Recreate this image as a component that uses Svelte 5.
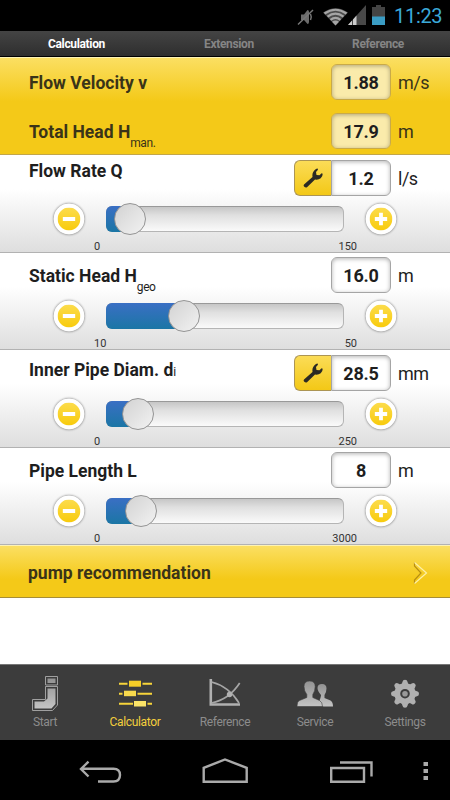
<script lang="ts">
	type Row = {
		label: string;
		sub?: string;
		value: string;
		unit: string;
		min: string;
		max: string;
		fill: number;
		tool: boolean;
		kind: string;
	};

	const tabs = ['Calculation', 'Extension', 'Reference'];
	let activeTab = $state('Calculation');
	let activeItem = $state('Calculator');

	const results = [
		{ label: 'Flow Velocity v', sub: '', value: '1.88', unit: 'm/s' },
		{ label: 'Total Head H', sub: 'man.', value: '17.9', unit: 'm' }
	];

	const rows: Row[] = [
		{ label: 'Flow Rate Q', value: '1.2', unit: 'l/s', min: '0', max: '150', fill: 23.5, tool: true, kind: 'flow' },
		{ label: 'Static Head H', sub: 'geo', value: '16.0', unit: 'm', min: '10', max: '50', fill: 78, tool: false, kind: 'lift' },
		{ label: 'Inner Pipe Diam. d', sub: 'i', value: '28.5', unit: 'mm', min: '0', max: '250', fill: 32, tool: true, kind: 'diam' },
		{ label: 'Pipe Length L', value: '8', unit: 'm', min: '0', max: '3000', fill: 35, tool: false, kind: 'length' }
	];

	const items = ['Start', 'Calculator', 'Reference', 'Service', 'Settings'];
</script>

<div class="screen">
	<div class="status">
		<svg class="mute" width="18" height="20" viewBox="0 0 18 20">
			<path d="M4 7.500h3l3.500-4.500q1.500 0 1.500 2v10q0 2-1.500 2l-3.500-4H4z" fill="#6c6c6c" />
			<path d="M13.500 7q1.500 3 0 6M1 17.500L16 3" fill="none" stroke="#777" stroke-width="1.500" />
		</svg>
		<svg class="wifi" width="25" height="18" viewBox="0 0 25 18">
			<path d="M12.500 17.500L0 4.500Q12.500-4 25 4.500Z" fill="#4c4c4c" />
			<g fill="none" stroke="#a5a5a5" stroke-width="2.200">
				<path d="M1.500 5.500q11-7.500 22 0M4.500 8.700q8-6 16 0M7.500 11.800q5-4 10 0" />
			</g>
			<path d="M12.500 17.500L9 13.800q3.500-2.500 7 0z" fill="#a5a5a5" />
		</svg>
		<svg class="signal" width="18" height="20" viewBox="0 0 18 20">
			<path d="M0 20L18 0V20Z" fill="#484848" />
			<path d="M0 20L4 15.500V20ZM5 14.400L8.500 10.500V20H5Z" fill="#ccc" />
		</svg>
		<svg class="battery" width="13" height="20" viewBox="0 0 13 20">
			<path d="M0 2H4V0H9V2H13V12H0Z" fill="#444" />
			<path d="M0 11.500H13V20H0Z" fill="#3a9cc4" />
		</svg>
		<span class="clock">11:23</span>
	</div>

	<div class="tabs">
		{#each tabs as tab}
			<button class="tab" class:active={tab === activeTab} onclick={() => (activeTab = tab)}>{tab}</button>
		{/each}
	</div>

	<div class="results">
		{#each results as r}
			<div class="result">
				<span class="label">{r.label}{#if r.sub}<sub>{r.sub}</sub>{/if}</span>
				<span class="value">{r.value}</span>
				<span class="unit">{r.unit}</span>
			</div>
		{/each}
	</div>

	{#each rows as row}
		<div class="row {row.kind}" class:tooled={row.tool}>
			<div class="head">
				<span class="label">{row.label}{#if row.sub}<sub>{row.sub}</sub>{/if}</span>
				{#if row.tool}
					<button class="tool" aria-label="Options">
						<svg width="22" height="22" viewBox="0 0 22 22">
							<path d="M2 17.500L10.500 10Q9.800 6 12.500 3.200Q14.200 1.400 15.600 1.600L16 2.800L14 5L14.500 8L17.500 8.300L19.600 6.300L20.700 6.800Q20.800 9.300 18.700 11.200Q16.300 13.100 13 12.500L5 20.200Q3.700 21 2.300 19.800Q1 18.700 2 17.500Z" fill="#2b2a24" />
						</svg>
					</button>
				{/if}
				<span class="value">{row.value}</span>
				<span class="unit">{row.unit}</span>
			</div>
			<div class="slide">
				<button class="round" aria-label="Decrease">
					<svg width="24" height="24" viewBox="0 0 24 24"><path d="M5.500 12H18.500" stroke="#fff" stroke-width="4" /></svg>
				</button>
				<div class="track">
					<div class="fill" style="width: {row.fill}px"></div>
					<div class="knob"></div>
				</div>
				<button class="round" aria-label="Increase">
					<svg width="24" height="24" viewBox="0 0 24 24"><path d="M5.500 12H18.500M12 5.500V18.500" stroke="#fff" stroke-width="4" /></svg>
				</button>
			</div>
			<div class="scale"><span>{row.min}</span><span>{row.max}</span></div>
		</div>
	{/each}

	<button class="pump">
		<span>pump recommendation</span>
		<svg width="16" height="24" viewBox="0 0 16 24">
			<path d="M1.500 1.500V5L8 12L1.500 19V22.500" fill="none" stroke="#b88e12" stroke-width="1.200" />
			<path d="M1.500 1.500L13.500 12L1.500 22.500" fill="none" stroke="#fdf0a8" stroke-width="1.200" />
		</svg>
	</button>

	<div class="blank"></div>

	<div class="bottom">
		{#each items as item}
			<button class="item" class:active={item === activeItem} onclick={() => (activeItem = item)}>
				<svg width="60" height="40" viewBox="0 0 60 40">
					<defs>
						<linearGradient id="metal" x1="0" y1="0" x2="0" y2="1">
							<stop offset="0" stop-color="#929292" />
							<stop offset="1" stop-color="#c4c4c4" />
						</linearGradient>
					</defs>
					{#if item === 'Start'}
						<g fill="#3c3c3c" stroke="#a0a0a0" stroke-width="1">
							<path d="M30.500 4.500H42.500V13H30.500ZM30.500 14.500H42.500V33L37.500 38.500H17.500V27.500H30.500Z" />
						</g>
						<path d="M32.500 6.500H40.500V11H32.500ZM32.500 16.500H40.500V32L36.500 36.500H19.500V29.500H29L32.500 26.500Z" fill="url(#metal)" />
					{:else if item === 'Calculator'}
						<path d="M14 10.700h8.500v2H14zM37.500 10.700H47v2H37.500zM14 20.700h3.500v2H14zM32.500 20.700H47v2H32.500zM14 30.700h14v2H14zM42.500 30.700H47v2H42.500z" fill="#f6d33a" />
						<path d="M24 8.700h12v6H24z" fill="#f5cd27" />
						<path d="M19 18.700h12v5.500H19z" fill="#f8da4d" />
						<path d="M29 29h12v5.500H29z" fill="#fae368" />
					{:else if item === 'Reference'}
						<path d="M15.800 7V32.500H45" fill="none" stroke="#b0b0b0" stroke-width="2.600" />
						<path d="M16.500 10Q34 14.500 44 31M16.500 31Q34 27.500 44.700 11" fill="none" stroke="#a6a6a6" stroke-width="1.700" />
						<circle cx="34.500" cy="22.500" r="2.700" fill="#b2b2b2" />
					{:else if item === 'Service'}
						<path d="M34 32.500C34 28 36 26 36 23Q32.500 19 32.500 16Q32.500 12 37 12Q41.500 12 41.500 16.500Q41.500 20 39.500 23V26L45.500 28.500Q48 30 48 34.500H38.500Z" fill="url(#metal)" />
						<path d="M12 34.500Q12 29.500 14.500 28.500L21.800 25.500V22.500Q19 19 19 14.500Q19 9 24.600 9Q30.200 9 30.200 14.500Q30.200 19 27.800 22.500V25.500L34.500 28.500Q37.500 30 37.500 34.500Z" fill="url(#metal)" stroke="#3c3c3c" stroke-width=".6" />
					{:else}
						<g transform="translate(30 21.700)" fill="#b0b0b0">
							{#each [0, 45, 90, 135, 180, 225, 270, 315] as angle}
								<path d="M-4.200-9Q-2.600-10.500-2.500-12Q-2.200-14 0-14Q2.200-14 2.500-12Q2.600-10.500 4.200-9Z" transform="rotate({angle})" />
							{/each}
							<circle r="10.500" />
							<circle r="3.800" fill="#999" stroke="#3c3c3c" stroke-width="2" />
						</g>
					{/if}
				</svg>
				<span>{item}</span>
			</button>
		{/each}
	</div>

	<div class="nav">
		<svg width="125" height="60" viewBox="0 0 125 60">
			<path d="M51.500 21.700L44 29L51.500 36.500M44.500 28.700H76.500Q83 28.700 83 35T76.500 41.500H61" fill="none" stroke="#aaa" stroke-width="2.400" />
		</svg>
		<svg width="125" height="60" viewBox="0 0 125 60">
			<path d="M41.700 41.700V27.800L63 19.500L84.700 27.800V41.700Z" fill="none" stroke="#aaa" stroke-width="2.400" />
		</svg>
		<svg width="125" height="60" viewBox="0 0 125 60">
			<path d="M44.200 28H77V41.700H44.200ZM53 22.500H84.500V36.500" fill="none" stroke="#aaa" stroke-width="2.400" />
		</svg>
		<svg width="38" height="60" viewBox="0 0 38 60">
			<path d="M11.500 22h4.500v4h-4.500zM11.500 29h4.500v4h-4.500zM11.500 36h4.500v4h-4.500z" fill="#aaa" />
		</svg>
	</div>
</div>

<style>
	:global(body) {
		background: #fff;
	}

	.screen {
		display: flex;
		flex-direction: column;
		width: 450px;
		height: 800px;
		overflow: hidden;
		background: #fff;
		font-family: Roboto, sans-serif;
		color: #1e1e1e;
	}

	.screen * {
		box-sizing: border-box;
	}

	button {
		padding: 0;
		border: 0;
		background: none;
		font-family: inherit;
		color: inherit;
	}

	svg {
		display: block;
		flex: none;
	}

	.status {
		display: flex;
		align-items: flex-start;
		height: 31px;
		padding: 5px 8px 0 297px;
		background: #000;
	}

	.mute {
		margin: 2px 8px 0 0;
	}

	.wifi {
		margin-top: 3px;
	}

	.signal {
		margin-right: 6px;
	}

	.clock {
		margin-left: 9px;
		font-size: 20px;
		line-height: 23px;
		letter-spacing: -0.3px;
		color: #3ba9d8;
		white-space: nowrap;
	}

	.tabs {
		display: grid;
		grid-template-columns: 153px 152px 146px;
		height: 26px;
		background: linear-gradient(#444, #2e2e2e);
		border-bottom: 1px solid #000;
	}

	.tab {
		font-size: 12px;
		font-weight: 700;
		line-height: 27px;
		letter-spacing: -0.35px;
		color: #858585;
	}

	.tab.active {
		color: #fff;
	}

	.results {
		height: 98px;
		padding-top: 6px;
		background: linear-gradient(#fbdf62, #f4c918 45%, #f4c918);
		border-top: 1px solid #fdf2b5;
		border-bottom: 1px solid #c2a64a;
	}

	.result,
	.head {
		display: flex;
		padding-left: 29px;
	}

	.result {
		height: 49px;
	}

	.label {
		flex: 1;
		font-size: 17.5px;
		font-weight: 700;
		line-height: 38px;
		white-space: nowrap;
	}

	.results .label,
	.results .unit {
		color: #3a3418;
	}

	sub {
		position: relative;
		top: 9px;
		font-size: 12px;
		font-weight: 400;
		line-height: 0;
		letter-spacing: -0.4px;
		vertical-align: baseline;
	}

	.value {
		width: 60px;
		height: 36px;
		border: 1.5px solid #a5a5a5;
		border-radius: 6px;
		background: #fff;
		box-shadow: inset 0 1px 4px rgba(0, 0, 0, 0.3);
		font-size: 18px;
		font-weight: 700;
		line-height: 35px;
		text-align: center;
		letter-spacing: -0.2px;
	}

	.results .value {
		border-color: #c9aa48;
		background: #faebab;
	}

	.unit {
		width: 52px;
		margin-left: 7px;
		font-size: 18px;
		line-height: 37px;
		letter-spacing: -0.5px;
	}

	.row {
		height: 97px;
		padding-top: 4px;
		background: linear-gradient(#fff 35%, #dedede);
		border-bottom: 1px solid #b2b2b2;
	}

	.row.tooled {
		height: 98px;
		padding-top: 5px;
	}

	.flow .label {
		line-height: 23px;
	}

	.diam .label {
		line-height: 30px;
	}

	.diam sub {
		top: 0;
	}

	.tool {
		display: flex;
		align-items: center;
		justify-content: center;
		width: 37px;
		height: 36px;
		border: 1.5px solid #ac9554;
		border-right: 0;
		border-radius: 6px 0 0 6px;
		background: linear-gradient(#fbdc57, #f3c816);
	}

	.tooled .value {
		border-radius: 0 6px 6px 0;
		border-left-width: 1px;
	}

	.slide {
		display: flex;
		align-items: center;
		height: 32px;
		padding-left: 53px;
		margin-top: 5px;
	}

	.tooled .slide {
		margin-top: 5.5px;
	}

	.round {
		display: flex;
		align-items: center;
		justify-content: center;
		width: 32px;
		height: 32px;
		border: 4px solid #fff;
		border-radius: 50%;
		background: linear-gradient(#fcdc4c, #f8cb0c);
		box-shadow: 0 0 2px 1px rgba(0, 0, 0, 0.28);
		transform: scale(0.95);
	}

	.track {
		display: flex;
		align-items: center;
		width: 238px;
		height: 26px;
		margin: 0 21px;
		border: 1px solid #b5b5b5;
		border-top-color: #999;
		border-radius: 6px;
		background: linear-gradient(#c6c6c6, #e0e0e0 35%, #fafafa);
	}

	.fill {
		height: 26px;
		margin-left: -1px;
		border-radius: 6px 0 0 6px;
		background: linear-gradient(#3a6fc4, #1b76a5);
	}

	.knob {
		flex: none;
		width: 32px;
		height: 32px;
		margin-left: -16px;
		border: 1.5px solid #949494;
		border-radius: 50%;
		background: linear-gradient(135deg, #d2d2d2, #f2f2f2);
	}

	.scale {
		display: flex;
		justify-content: space-between;
		padding: 5px 93px 0 94px;
		font-size: 11px;
		line-height: 14px;
		color: #333;
	}

	.pump {
		display: flex;
		align-items: center;
		justify-content: space-between;
		height: 53px;
		padding: 2px 21px 0 28px;
		background: linear-gradient(#fbdf62, #f4c918 65%, #f4c918);
		border-top: 1px solid #fdf2b5;
		border-bottom: 1px solid #a58d38;
		font-size: 17.5px;
		font-weight: 700;
		color: #3a3418;
	}

	.blank {
		flex: 1;
	}

	.bottom {
		display: flex;
		height: 76px;
		padding-top: 7px;
		background: #3c3c3c;
		border-top: 1px solid #777;
	}

	.item {
		display: flex;
		flex-direction: column;
		align-items: center;
		width: 90px;
		font-size: 12px;
		line-height: 20px;
		letter-spacing: -0.35px;
		color: #8c8c8c;
	}

	.item.active {
		color: #f4cf3c;
	}

	.nav {
		display: flex;
		height: 60px;
		padding-left: 37px;
		background: #000;
	}
</style>
